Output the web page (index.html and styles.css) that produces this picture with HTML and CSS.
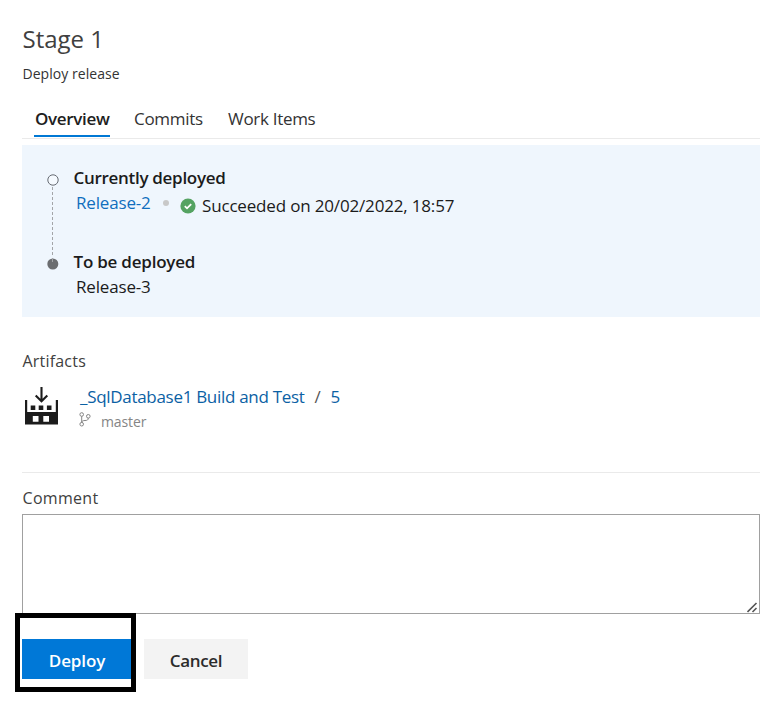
FILE: index.html
```html
<!DOCTYPE html>
<html lang="en">
<head>
<meta charset="utf-8">
<title>Stage 1</title>
<link rel="stylesheet" href="styles.css">
</head>
<body>
<main class="dialog">
  <h1 class="title">Stage 1</h1>
  <p class="subtitle">Deploy release</p>
  <nav class="tabs">
    <a class="tab tab-active">Overview</a>
    <a class="tab tab-commits">Commits</a>
    <a class="tab">Work Items</a>
  </nav>
  <section class="panel">
    <svg class="timeline" width="14" height="97" viewBox="0 0 14 97">
      <path d="M6.500 14V84" stroke="#a3a5a8" stroke-dasharray="3 2"/>
      <circle cx="7" cy="7" r="5.200" fill="#f5faff" stroke="#666b73"/>
      <circle cx="6.800" cy="91" r="5.500" fill="#6b6d70"/>
      <path d="M6.500 85v4" stroke="#a3a5a8"/>
    </svg>
    <div class="steps">
      <div class="step-name">Currently deployed</div>
      <div class="release-row">
        <a class="link">Release-2</a>
        <span class="dot"></span>
        <span class="status">
          <svg width="16" height="16" viewBox="0 0 16 16"><circle cx="8" cy="8" r="7.600" fill="#55a362"/><path d="M4.800 8.200l2.200 2.100 4.200-4.200" fill="none" stroke="#fff" stroke-width="1.800"/></svg>
          <span>Succeeded on 20/02/2022, 18:57</span>
        </span>
      </div>
      <div class="step-name step-next">To be deployed</div>
      <div class="next-release">Release-3</div>
    </div>
  </section>
  <h2 class="label">Artifacts</h2>
  <section class="artifact">
    <svg class="build" width="33" height="38" viewBox="0 0 33 38">
      <path d="M0 13h2.200v12h28.600V13H33V37.500H0z" fill="#1c1c1c"/>
      <path d="M5.700 18.500h4.600V23H5.700zM13.700 18.500h4.600V23h-4.600zM21.900 18.500h4.600V23h-4.600z" fill="#1c1c1c"/>
      <path d="M7.800 29h5.700v5.800H7.800zM18.300 29H24v5.800h-5.700z" fill="#fff"/>
      <path d="M16.500 0v14M10.700 8.500l5.800 5.800 5.800-5.800" fill="none" stroke="#1c1c1c" stroke-width="2.100"/>
    </svg>
    <div>
      <div class="artifact-name"><a>_SqlDatabase1 Build and Test</a><span class="slash">/</span><a>5</a></div>
      <div class="branch">
        <svg width="12" height="15" viewBox="0 0 12 15" fill="none" stroke="#858585"><circle cx="2.700" cy="2.500" r="1.800"/><circle cx="9.300" cy="4.300" r="1.800"/><circle cx="2.700" cy="12.200" r="1.800"/><path d="M2.700 4.300v6.100M9.300 6.100c0 2-1.300 2.400-3.300 2.400-1.800 0-3.300.5-3.300 2"/></svg>
        <span>master</span>
      </div>
    </div>
  </section>
  <label class="label comment-label" for="comment">Comment</label>
  <div class="comment-box">
    <textarea class="comment" id="comment"></textarea>
    <svg class="grip" width="11" height="11" viewBox="0 0 11 11" stroke="#555" stroke-width="1.600"><path d="M.5 10l9-9M5.500 10l4-4"/></svg>
  </div>
  <div class="actions">
    <button class="button primary">Deploy</button>
    <button class="button cancel">Cancel</button>
    <div class="highlight"></div>
  </div>
</main>
</body>
</html>
```
FILE: styles.css
```css
* { box-sizing: border-box; }
body { margin: 0; background: #fff; }
.dialog {
  width: 783px;
  height: 717px;
  padding: 21px 23px 0 22px;
  font: 17px/24px "Open Sans", "Noto Sans", sans-serif;
  letter-spacing: -0.17px;
  color: #202020;
  white-space: nowrap;
}
.title { margin: 0; padding-left: 0.5px; font-size: 24px; line-height: 36px; font-weight: 400; letter-spacing: 0; color: #404040; }
.subtitle { margin: 7px 0 23px; padding-left: 0.5px; font-size: 14px; line-height: 20px; letter-spacing: 0.05px; color: #333; }
.tabs { display: flex; height: 32px; padding-left: 12px; border-bottom: 1px solid #eaeaea; letter-spacing: -0.3px; color: #333; }
.tab { height: 30px; margin-right: 24px; }
.tab-active { width: 76px; padding-left: 1px; border-bottom: 2px solid #0078d4; font-weight: 550; letter-spacing: -0.32px; color: #202020; }
.tab-commits { width: 70px; }
.panel { display: flex; height: 172px; margin-top: 6px; padding: 21px 0 0 24px; background: #eff6fd; }
.timeline { margin: 7px 13.5px 0 0; }
.step-name { font-weight: 550; color: #1b1b1b; letter-spacing: -0.3px; }
.step-next { letter-spacing: -0.22px; }
.release-row { display: flex; height: 60px; padding: 1px 0 0 2.5px; }
.link { width: 75px; color: #106ebe; }
.dot { width: 6px; height: 6px; margin: 9px 11px 0 11.5px; border-radius: 50%; background: #c8c8c8; }
.status { display: flex; gap: 6.5px; padding-top: 3px; color: #1b1b1b; }
.status svg { margin-top: 4px; }
.next-release { padding: 1px 0 0 2.5px; color: #1b1b1b; }
.label { display: block; margin: 32px 0 0; padding-left: 0.5px; font-size: 16px; line-height: 24px; font-weight: 400; letter-spacing: 0.2px; color: #404040; }
.artifact { display: flex; height: 100px; padding-top: 12px; border-bottom: 1px solid #eaeaea; }
.build { margin: 2px 21px 0 3px; }
.artifact-name { color: #0b61a4; padding-left: 1px; letter-spacing: -0.3px; }
.slash { margin: 0 10px; color: #555; }
.branch { display: flex; gap: 10px; margin-top: 3px; font-size: 14px; line-height: 20px; letter-spacing: -0.1px; color: #858585; }
.comment-label { margin-top: 13px; letter-spacing: 0.3px; }
.comment-box { position: relative; height: 100px; margin-top: 4px; }
.comment { display: block; width: 100%; height: 100px; resize: none; border: 1px solid #a0a0a0; border-radius: 0; }
.grip { position: absolute; right: 2px; bottom: 1px; }
.actions { position: relative; display: flex; gap: 12px; margin-top: 25px; }
.button { height: 40px; padding: 3px 0 0; border: 0; font: 600 17px/24px "Open Sans", sans-serif; letter-spacing: -0.1px; }
.primary { width: 110px; background: #0078d7; color: #fff; }
.cancel { width: 104px; background: #f3f3f3; color: #2b2b2b; font-weight: 550; letter-spacing: -0.3px; }
.highlight { position: absolute; left: -7px; top: -26px; width: 121px; height: 79px; border: 5px solid #000; }
```
